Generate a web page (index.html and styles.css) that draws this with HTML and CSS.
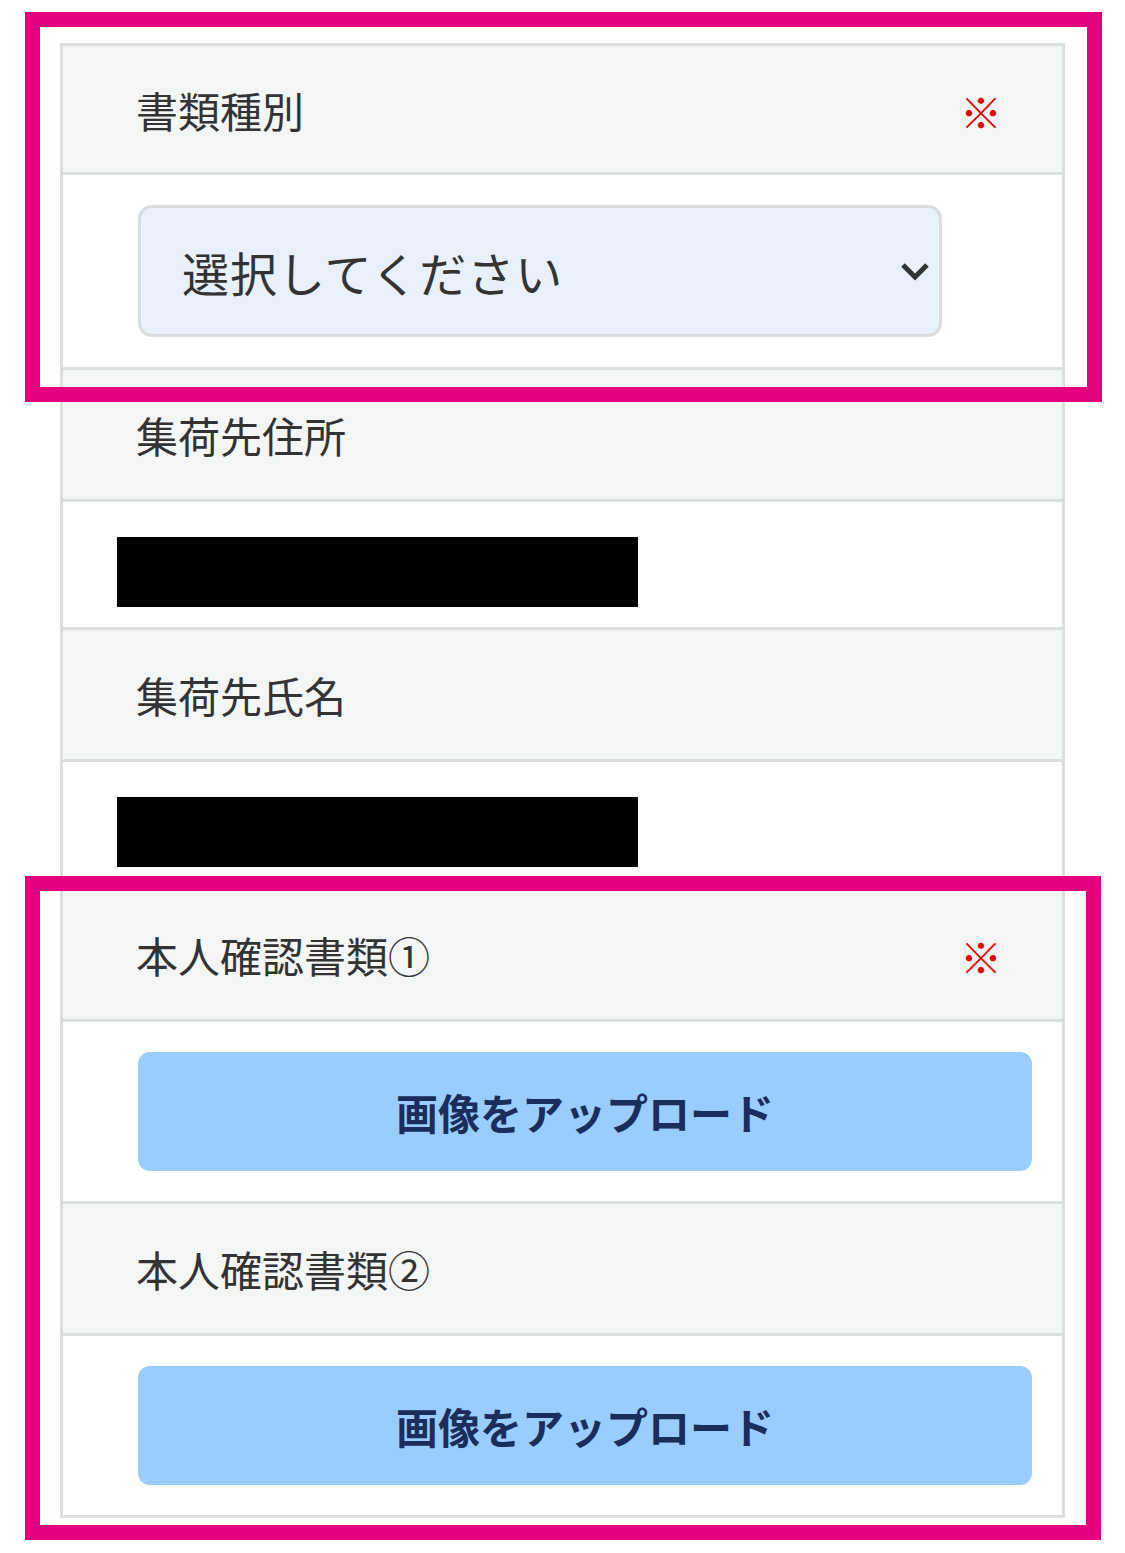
FILE: index.html
```html
<!DOCTYPE html>
<html lang="ja">
<head>
<meta charset="utf-8">
<title>書類</title>
<link rel="stylesheet" href="styles.css">
</head>
<body>
<div class="page">
  <div class="form">
    <div class="row head">
      <span class="label">書類種別</span>
      <span class="req">※</span>
    </div>
    <div class="row body select-row">
      <div class="select">
        <span class="select-text">選択してください</span>
        <svg class="chevron" width="30" height="22" viewBox="0 0 30 22"><polyline points="3,5 15,17 27,5" fill="none" stroke="#333" stroke-width="5" stroke-linecap="butt" stroke-linejoin="miter"/></svg>
      </div>
    </div>
    <div class="row head">
      <span class="label">集荷先住所</span>
    </div>
    <div class="row body text-row">
      <div class="redacted"></div>
    </div>
    <div class="row head">
      <span class="label">集荷先氏名</span>
    </div>
    <div class="row body text-row">
      <div class="redacted"></div>
    </div>
    <div class="row head">
      <span class="label">本人確認書類①</span>
      <span class="req">※</span>
    </div>
    <div class="row body button-row">
      <div class="upload">画像をアップロード</div>
    </div>
    <div class="row head">
      <span class="label">本人確認書類②</span>
    </div>
    <div class="row body button-row">
      <div class="upload">画像をアップロード</div>
    </div>
  </div>
  <div class="highlight hl-top"></div>
  <div class="highlight hl-bottom"></div>
</div>
</body>
</html>
```

FILE: styles.css
```css
html, body {
  margin: 0;
  padding: 0;
  background: #ffffff;
}

body {
  font-family: "Noto Sans CJK JP", "Noto Sans", sans-serif;
  color: #333333;
}

.page {
  position: relative;
  padding: 43px 60px 0 60px;
  min-height: 1553px;
  box-sizing: border-box;
}

.form {
  border: 3px solid #dcdfdf;
  background: #ffffff;
}

.row {
  box-sizing: content-box;
}

.row + .row {
  border-top: 3px solid #dcdfdf;
}

.head {
  height: 129px;
  background: #f4f5f5;
  display: flex;
  align-items: center;
  justify-content: space-between;
  padding: 0 60px 0 73px;
}

.head:first-child {
  height: 126px;
}

.label {
  font-size: 42px;
  line-height: 1;
  color: #333333;
  padding-top: 1px;
}

.req {
  font-size: 42px;
  line-height: 1;
  color: #e60000;
  padding-top: 3px;
}

.body {
  background: #ffffff;
  display: flex;
}

.select-row {
  height: 132px;
  padding: 30px 0 30px 75px;
}

.select {
  width: 804px;
  height: 132px;
  box-sizing: border-box;
  border: 3px solid #d9dcdd;
  border-radius: 14px;
  background: #e8f0fc;
  display: flex;
  align-items: center;
  justify-content: space-between;
  padding: 0 9px 0 41px;
}

.select-text {
  font-size: 47px;
  line-height: 1;
  color: #333333;
  letter-spacing: 1px;
}

.chevron {
  display: block;
}

.text-row {
  height: 90px;
  padding: 35px 0 0 54px;
}

.redacted {
  width: 521px;
  height: 70px;
  background: #000000;
}

.button-row {
  height: 119px;
  padding: 30px 30px 30px 75px;
}

.upload {
  flex: 1;
  height: 119px;
  border-radius: 12px;
  background: #99ccff;
  color: #1b2d5b;
  font-size: 42px;
  font-weight: 700;
  display: flex;
  align-items: center;
  justify-content: center;
  line-height: 1;
}

.highlight {
  position: absolute;
  border: 15px solid #e4007f;
  box-sizing: border-box;
  pointer-events: none;
}

.hl-top {
  left: 25px;
  top: 12px;
  width: 1077px;
  height: 390px;
}

.hl-bottom {
  left: 25px;
  top: 876px;
  width: 1076px;
  height: 664px;
}
```
